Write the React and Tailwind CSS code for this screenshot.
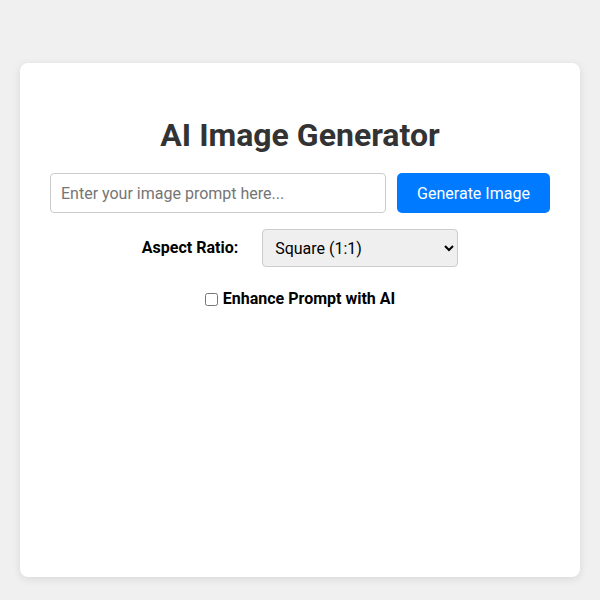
// AI image generator form card
import { useState } from "react";

export default function App() {
  const [prompt, setPrompt] = useState("");
  const [ratio, setRatio] = useState("1:1");
  const [enhance, setEnhance] = useState(false);

  return (
    <div
      className="min-h-screen bg-[#f0f0f0] px-5 pt-[63px] pb-[23px]"
      style={{ fontFamily: "Roboto, 'Liberation Sans', sans-serif" }}
    >
      <div className="h-[514px] rounded-lg bg-white px-[30px] pt-[53px] shadow-[0_2px_8px_rgba(0,0,0,0.1)]">
        <h1 className="text-center text-[32px] font-bold leading-[38px] text-[#333]">
          AI Image Generator
        </h1>
        <div className="mt-[19px] flex gap-[11px]">
          <input
            type="text"
            value={prompt}
            onChange={(e) => setPrompt(e.target.value)}
            placeholder="Enter your image prompt here..."
            className="h-10 flex-1 rounded-[4px] border border-[#ccc] px-[10px] text-base text-[#333] placeholder:text-[#757575] outline-none"
          />
          <button className="h-10 w-[153px] rounded-[5px] bg-[#007bff] pt-px text-base text-white">
            Generate Image
          </button>
        </div>
        <div className="mt-4 flex items-center justify-center gap-6">
          <label className="text-base font-bold text-black">Aspect Ratio:</label>
          <select
            value={ratio}
            onChange={(e) => setRatio(e.target.value)}
            className="h-[38px] w-[196px] rounded-[4px] border border-[#ccc] bg-[#efefef] px-2 text-base text-black"
          >
            <option value="1:1">Square (1:1)</option>
            <option value="16:9">Landscape (16:9)</option>
            <option value="9:16">Portrait (9:16)</option>
          </select>
        </div>
        <div className="mt-5 flex items-center justify-center gap-[5px]">
          <input
            type="checkbox"
            checked={enhance}
            onChange={(e) => setEnhance(e.target.checked)}
            className="h-[13px] w-[13px]"
          />
          <span className="text-base font-bold text-black">Enhance Prompt with AI</span>
        </div>
      </div>
    </div>
  );
}
